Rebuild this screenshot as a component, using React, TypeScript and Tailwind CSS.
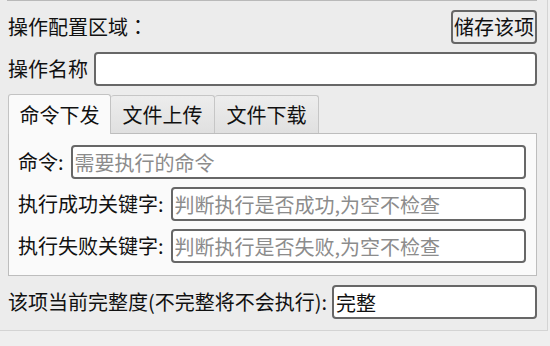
import React from 'react';

const font = { fontFamily: '"Noto Sans CJK SC", "Noto Sans", sans-serif' };

const TABS = ['命令下发', '文件上传', '文件下载'];

const Field: React.FC<{ placeholder?: string; value?: string; className?: string }> = ({ placeholder, value, className }) => (
  <input
    readOnly
    value={value}
    placeholder={placeholder}
    className={`h-[34px] min-w-0 flex-1 rounded-[4px] border-2 border-[#676767] bg-white px-[2px] text-[20px] text-[#111] outline-none placeholder:text-[#8c8c8c] ${className ?? ''}`}
    style={font}
  />
);

const App: React.FC = () => {
  return (
    <div className="h-[346px] w-[550px] overflow-hidden bg-[#efefef] text-[20px] leading-none text-[#111]" style={font}>
      <div className="flex h-[331px] w-[548px] flex-col border-r border-b border-[#d4d4d4] bg-[#ececec] pl-[8px] pr-[10px]">
        {/* leftover edge of the widget above */}
        <div className="-ml-[1px] h-px bg-[#b9b9b9]" />

        {/* header */}
        <div className="mt-[9px] flex h-[34px] items-center justify-between">
          <span>
            操作配置区域<span style={{ fontFamily: '"Noto Sans CJK TC", sans-serif' }}>：</span>
          </span>
          <button className="h-[34px] rounded-[4px] border-2 border-[#676767] bg-[#ececec] px-[1px] text-[20px]" style={font}>
            储存该项
          </button>
        </div>

        {/* name */}
        <div className="mt-[8px] flex items-center gap-[6px]">
          <span>操作名称</span>
          <Field />
        </div>

        {/* tabs */}
        <div className="mt-[8px] flex h-[39px] items-end">
          {TABS.map((t, i) =>
            i === 0 ? (
              <div key={t} className="relative z-10 -mb-px flex h-[40px] w-[103px] items-center justify-center rounded-t-[3px] border border-b-0 border-[#c3c3c3] bg-[#fafafa]">
                {t}
              </div>
            ) : (
              <div key={t} className="flex h-[38px] w-[104px] items-center justify-center rounded-t-[3px] border border-l-0 border-b-0 border-[#c6c6c6] bg-gradient-to-b from-[#ededed] to-[#e0e0e0]">
                {t}
              </div>
            )
          )}
        </div>

        <div className="flex h-[143px] flex-col gap-[8px] border border-[#bdbdbd] bg-[#fafafa] pt-[11px] pl-[9px] pr-[10px]">
          <div className="flex items-center gap-[7px]">
            <span>命令:</span>
            <Field placeholder="需要执行的命令" />
          </div>
          <div className="flex items-center gap-[7px]">
            <span>执行成功关键字:</span>
            <Field placeholder="判断执行是否成功,为空不检查" />
          </div>
          <div className="flex items-center gap-[7px]">
            <span>执行失败关键字:</span>
            <Field placeholder="判断执行是否失败,为空不检查" />
          </div>
        </div>

        {/* completeness */}
        <div className="mt-[9px] flex items-center gap-[5px]">
          <span>该项当前完整度(不完整将不会执行):</span>
          <Field value="完整" />
        </div>
      </div>
    </div>
  );
};

export default App;
